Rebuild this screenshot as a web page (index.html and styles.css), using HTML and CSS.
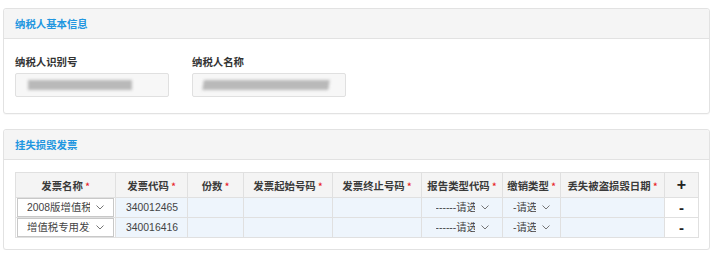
FILE: index.html
```html
<!DOCTYPE html>
<html lang="zh-CN">
<head>
<meta charset="utf-8">
<title>挂失损毁发票</title>
<link rel="stylesheet" href="styles.css">
</head>
<body>
<div class="page">
  <section class="panel panel-info">
    <div class="panel-head"><h2 class="panel-title">纳税人基本信息</h2></div>
    <div class="panel-body info-body">
      <div class="field">
        <div class="field-label">纳税人识别号</div>
        <div class="field-input"><span class="redact redact-id"></span></div>
      </div>
      <div class="field">
        <div class="field-label">纳税人名称</div>
        <div class="field-input"><span class="redact redact-name"></span></div>
      </div>
    </div>
  </section>

  <section class="panel panel-invoice">
    <div class="panel-head"><h2 class="panel-title">挂失损毁发票</h2></div>
    <div class="panel-body table-body">
      <table class="grid">
        <colgroup>
          <col class="c1"><col class="c2"><col class="c3"><col class="c4"><col class="c5">
          <col class="c6"><col class="c7"><col class="c8"><col class="c9">
        </colgroup>
        <thead>
          <tr>
            <th>发票名称 <i class="req">*</i></th>
            <th>发票代码 <i class="req">*</i></th>
            <th>份数 <i class="req">*</i></th>
            <th>发票起始号码 <i class="req">*</i></th>
            <th>发票终止号码 <i class="req">*</i></th>
            <th>报告类型代码 <i class="req">*</i></th>
            <th>缴销类型 <i class="req">*</i></th>
            <th>丢失被盗损毁日期 <i class="req">*</i></th>
            <th class="op">+</th>
          </tr>
        </thead>
        <tbody>
          <tr>
            <td class="sel-cell"><div class="sel sel-boxed"><span class="sel-text w-name">2008版增值税专用发票</span><svg class="chev" viewBox="0 0 8 5" width="8" height="5"><polyline points="0.5,0.5 4,4 7.5,0.5"/></svg></div></td>
            <td class="num">340012465</td>
            <td></td>
            <td></td>
            <td></td>
            <td><div class="sel"><span class="sel-text w-type">------请选择------</span><svg class="chev" viewBox="0 0 8 5" width="8" height="5"><polyline points="0.5,0.5 4,4 7.5,0.5"/></svg></div></td>
            <td><div class="sel"><span class="sel-text w-kind">-请选择-</span><svg class="chev" viewBox="0 0 8 5" width="8" height="5"><polyline points="0.5,0.5 4,4 7.5,0.5"/></svg></div></td>
            <td></td>
            <td class="op">-</td>
          </tr>
          <tr>
            <td class="sel-cell"><div class="sel sel-boxed"><span class="sel-text w-name">增值税专用发票</span><svg class="chev" viewBox="0 0 8 5" width="8" height="5"><polyline points="0.5,0.5 4,4 7.5,0.5"/></svg></div></td>
            <td class="num">340016416</td>
            <td></td>
            <td></td>
            <td></td>
            <td><div class="sel"><span class="sel-text w-type">------请选择------</span><svg class="chev" viewBox="0 0 8 5" width="8" height="5"><polyline points="0.5,0.5 4,4 7.5,0.5"/></svg></div></td>
            <td><div class="sel"><span class="sel-text w-kind">-请选择-</span><svg class="chev" viewBox="0 0 8 5" width="8" height="5"><polyline points="0.5,0.5 4,4 7.5,0.5"/></svg></div></td>
            <td></td>
            <td class="op">-</td>
          </tr>
        </tbody>
      </table>
    </div>
  </section>
</div>
</body>
</html>
```
FILE: styles.css
```css
html, body {
  margin: 0;
  padding: 0;
  background: #fff;
}
body {
  font-family: "Liberation Sans", "Noto Sans CJK SC", sans-serif;
  font-size: 10.4px;
  color: #333;
}
.page {
  padding: 8px 9px 0 3px;
  display: flex;
  flex-direction: column;
  gap: 15px;
}
.panel {
  border: 1px solid #e2e2e2;
  border-radius: 3px;
  background: #fff;
  box-shadow: 0 1px 1px rgba(0,0,0,0.03);
}
.panel-head {
  height: 29px;
  background: #f5f5f5;
  border-bottom: 1px solid #e2e2e2;
  display: flex;
  align-items: center;
  padding: 0 11px;
  border-radius: 3px 3px 0 0;
}
.panel-title {
  margin: 0;
  font-size: 10.4px;
  font-weight: bold;
  color: #2196e0;
  font-family: "Noto Sans CJK SC", sans-serif;
}
.info-body {
  height: 74px;
  box-sizing: border-box;
  padding: 16px 11px 0;
  display: flex;
  gap: 23px;
}
.field {
  display: flex;
  flex-direction: column;
  gap: 5px;
}
.field-label {
  font-family: "Noto Sans CJK SC", sans-serif;
  font-weight: bold;
  color: #333;
  line-height: 13px;
}
.field-input {
  width: 142px;
  height: 22px;
  border: 1px solid #e0e0e0;
  border-radius: 2px;
  background: #f7f7f7;
  display: flex;
  align-items: center;
  padding-left: 10px;
  box-sizing: content-box;
}
.redact {
  display: block;
  height: 10px;
  background: #b9b9b9;
  filter: blur(1.6px);
}
.redact-id { width: 104px; margin-left: 2px; }
.redact-name { width: 126px; transform: skewX(-8deg); }

.table-body {
  padding: 12px 11px 11px;
}
.grid {
  border-collapse: collapse;
  table-layout: fixed;
  width: 683px;
}
.c1 { width: 100px; }
.c2 { width: 72px; }
.c3 { width: 56px; }
.c4 { width: 89px; }
.c5 { width: 89px; }
.c6 { width: 81px; }
.c7 { width: 58px; }
.c8 { width: 104px; }
.c9 { width: 34px; }
.grid th, .grid td {
  border: 1px solid #e0e0e0;
  padding: 0;
}
.grid th {
  height: 24px;
  background: #f4f4f4;
  font-family: "Noto Sans CJK SC", sans-serif;
  font-weight: bold;
  color: #3a3a3a;
  text-align: center;
  white-space: nowrap;
  overflow: hidden;
}
.req {
  font-style: normal;
  color: #e8242a;
  font-weight: bold;
  font-size: 9px;
}
.grid td {
  height: 20px;
  box-sizing: border-box;
  background: #eef5fc;
  white-space: nowrap;
}
.grid td.num {
  padding-left: 10px;
  color: #444;
}
.grid td.sel-cell {
  background: #fff;
  padding: 0 1px;
}
.grid .op {
  background: #fff;
  text-align: center;
  font-weight: bold;
  color: #222;
  font-size: 15px;
  line-height: 18px;
}
.grid th.op {
  background: #f4f4f4;
  font-family: "Liberation Sans", sans-serif;
  font-size: 16px;
  font-weight: bold;
}
.sel {
  display: flex;
  align-items: center;
  justify-content: center;
  height: 18px;
  font-family: "Liberation Sans", "Noto Sans CJK SC", sans-serif;
  color: #444;
}
.sel-boxed {
  border: 1px solid #c8c8c8;
  box-sizing: border-box;
  height: 19px;
  background: #fff;
}
.sel-text {
  overflow: hidden;
  white-space: nowrap;
  display: block;
  line-height: 14px;
}
.w-name { width: 63px; }
.w-type { width: 39px; }
.w-kind { width: 23px; }
.chev {
  margin-left: 6px;
  fill: none;
  stroke: #666;
  stroke-width: 0.9;
}
```
